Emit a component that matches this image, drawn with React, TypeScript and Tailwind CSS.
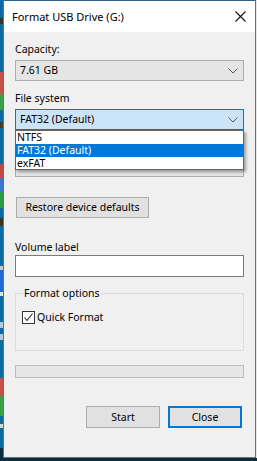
import React from 'react';

const font = { fontFamily: '"Noto Sans", "Liberation Sans", sans-serif' };

const Chevron = () => (
  <svg width="10" height="6" viewBox="0 0 10 6" className="shrink-0">
    <polyline points="0.5,0.5 5,5 9.5,0.5" fill="none" stroke="#5a5a5a" strokeWidth="1" />
  </svg>
);

// desktop strip peeking out at the left edge
const stripSegments = [
  { h: 18, c: 'bg-[#0b6aa3]' },
  { h: 6, c: 'bg-[#3a3520]' },
  { h: 48, c: 'bg-[#0b6aa3]' },
  { h: 22, c: 'bg-[#c8504a]' },
  { h: 16, c: 'bg-[#3aa04a]' },
  { h: 12, c: 'bg-[#0b6aa3]' },
  { h: 6, c: 'bg-[#4a4020]' },
  { h: 36, c: 'bg-[#0b6aa3]' },
  { h: 14, c: 'bg-[#c04840]' },
  { h: 14, c: 'bg-[#3a78d0]' },
  { h: 16, c: 'bg-[#2e9a48]' },
  { h: 10, c: 'bg-[#0b6aa3]' },
  { h: 8, c: 'bg-[#3a3520]' },
  { h: 40, c: 'bg-[#0b6aa3]' },
  { h: 4, c: 'bg-[#c8c8c8]' },
  { h: 22, c: 'bg-[#1e6ad0]' },
  { h: 4, c: 'bg-[#e0e0e0]' },
  { h: 26, c: 'bg-[#0b6aa3]' },
  { h: 6, c: 'bg-[#b8c8d8]' },
  { h: 6, c: 'bg-[#0b6aa3]' },
  { h: 6, c: 'bg-[#b8c8d8]' },
  { h: 38, c: 'bg-[#0b6aa3]' },
  { h: 18, c: 'bg-[#c8504a]' },
  { h: 20, c: 'bg-[#3aa04a]' },
  { h: 8, c: 'bg-[#0b6aa3]' },
  { h: 4, c: 'bg-[#d8d8c0]' },
  { h: 20, c: 'bg-[#0b6aa3]' },
];

export default function App() {
  return (
    <div className="w-[257px] h-[461px] flex flex-col bg-[#0c2c3e] overflow-hidden" style={font}>
      <div className="flex flex-1 min-h-0">
        <div className="w-[3px] flex flex-col overflow-hidden">
          {stripSegments.map((s, i) => (
            <div key={i} className={`${s.c} shrink-0`} style={{ height: s.h }} />
          ))}
        </div>
        <div className="w-[253px] flex flex-col border border-[#6e6e6e] border-t-[#2a5f86] bg-[#f0f0f0] text-[10.5px] text-black leading-[15px]">
          {/* title bar */}
          <div className="h-[31px] bg-white flex items-center justify-between pl-[8px] pr-[9px]">
            <span className="text-[11px]">Format USB Drive (G:)</span>
            <svg width="11" height="11" viewBox="0 0 11 11">
              <path d="M0.5 0.5 L10.5 10.5 M10.5 0.5 L0.5 10.5" stroke="#111" strokeWidth="1.1" />
            </svg>
          </div>

          <div className="flex flex-col px-[11px]">
            <div className="mt-[10px]">Capacity:</div>
            <div className="mt-[3px] h-[21px] border border-[#adadad] bg-[#e5e5e5] flex items-center justify-between pl-[4px] pr-[5px]">
              <span>7.61 GB</span>
              <Chevron />
            </div>

            <div className="mt-[10px]">File system</div>
            <div className="mt-[3px] h-[21px] border border-[#0078d7] bg-[#cce4f7] flex items-center justify-between pl-[4px] pr-[5px]">
              <span>FAT32 (Default)</span>
              <Chevron />
            </div>

            <div className="relative h-[47px]">
              {/* allocation unit select hidden under the open list */}
              <div className="mt-[26px] h-[21px] border border-[#adadad] bg-[#e5e5e5]" />
              <div className="absolute left-0 right-0 top-0 h-[40px] bg-white border border-[#646464] shadow-[2px_2px_3px_rgba(0,0,0,0.35)] flex flex-col leading-[13px]">
                <div className="h-[13px] pl-[1px]">NTFS</div>
                <div className="h-[13px] pl-[1px] bg-[#0078d7] text-white">FAT32 (Default)</div>
                <div className="h-[12px] pl-[1px]">exFAT</div>
              </div>
            </div>

            <div className="mt-[20px] ml-[1px] self-start h-[21px] w-[133px] border border-[#adadad] bg-[#e1e1e1] flex items-center justify-center">
              Restore device defaults
            </div>

            <div className="mt-[22px]">Volume label</div>
            <div className="h-[22px] border border-[#7a7a7a] bg-white" />

            <div className="relative mt-[16px] h-[58px] border border-[#dcdcdc]">
              <div className="absolute -top-[8px] left-[7px] bg-[#f0f0f0] px-[1px]">Format options</div>
              <div className="mt-[16px] ml-[6px] flex items-center gap-[2px]">
                <div className="w-[13px] h-[13px] border border-[#333] bg-white flex items-center justify-center">
                  <svg width="11" height="11" viewBox="0 0 11 11">
                    <polyline points="1.5,5.5 4,8.5 9.5,1.5" fill="none" stroke="#222" strokeWidth="1.1" />
                  </svg>
                </div>
                <span>Quick Format</span>
              </div>
            </div>

            <div className="mt-[14px] h-[13px] border border-[#bcbcbc] bg-[#e6e6e6]" />

            <div className="mt-[28px] flex justify-end gap-[8px] pr-[2px]">
              <div className="w-[74px] h-[22px] border border-[#adadad] bg-[#e1e1e1] flex items-center justify-center">
                Start
              </div>
              <div className="w-[74px] h-[22px] border-2 border-[#0078d7] bg-[#e1e1e1] flex items-center justify-center">
                Close
              </div>
            </div>
          </div>
        </div>
        <div className="w-[1px] bg-[#e8e8e8]" />
      </div>
      <div className="h-[3px] shrink-0" />
    </div>
  );
}
